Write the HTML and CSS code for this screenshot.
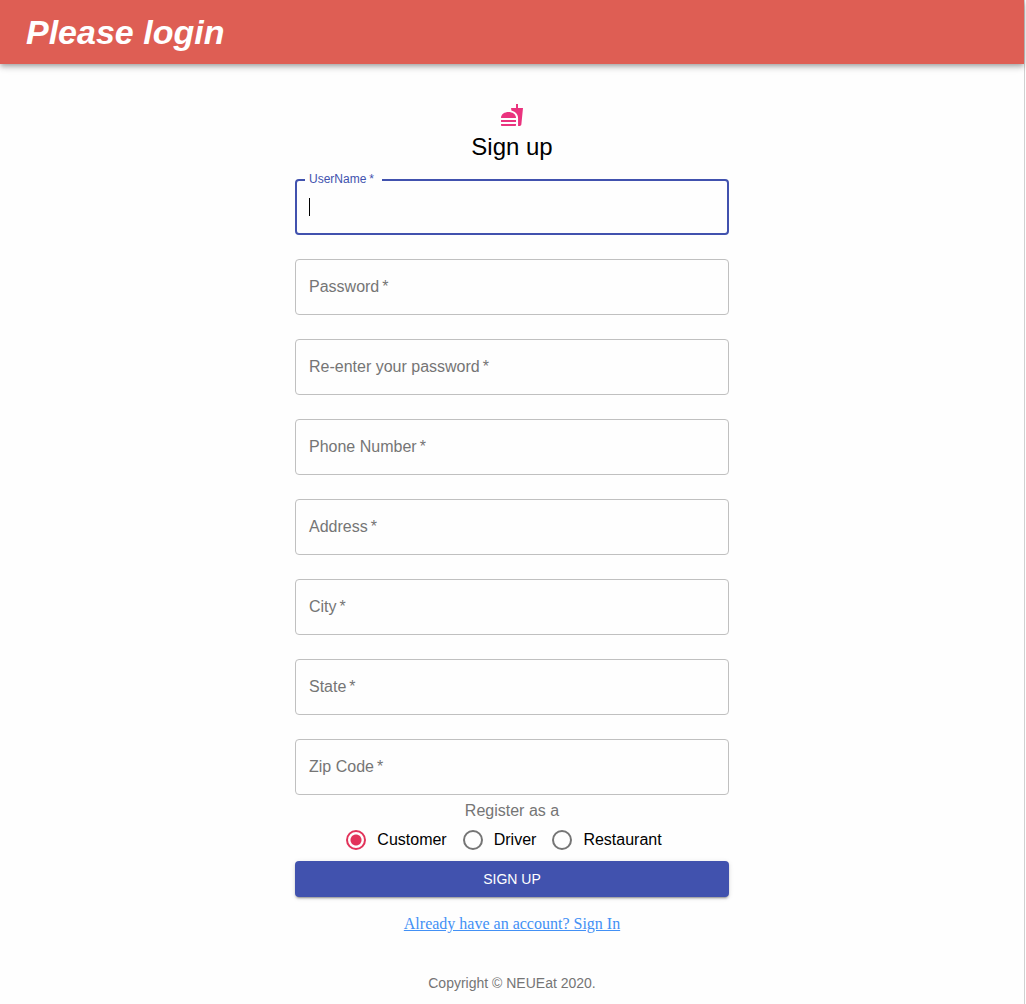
FILE: index.html
```html
<!DOCTYPE html>
<html lang="en">
<head>
  <meta charset="utf-8">
  <meta name="viewport" content="width=device-width, initial-scale=1">
  <title>Sign up</title>
  <link rel="stylesheet" href="styles.css">
</head>
<body>
  <div class="page">
    <header class="app-bar">
      <h1 class="app-title">Please login</h1>
    </header>
    <main class="container">
      <svg class="logo" viewBox="0 0 24 24" aria-hidden="true">
        <path d="M18.060 22.990h1.660c.84 0 1.530-.64 1.630-1.460L23 5.050h-5V1h-1.970v4.050h-4.970l.3 2.340c1.710.47 3.310 1.320 4.270 2.260 1.440 1.420 2.430 2.890 2.430 5.290v8.050zM1 21.990V21h15.030v.99c0 .55-.45 1-1.010 1H2.010c-.56 0-1.010-.45-1.010-1zm15.030-7c0-8-15.030-8-15.030 0h15.030zM1.020 17h15v2h-15z"/>
      </svg>
      <h2 class="title">Sign up</h2>
      <form class="form">
        <div class="fields">
          <div class="field field-active">
            <input class="field-input" type="text" id="username" required autofocus>
            <label class="field-label" for="username">UserName<span class="mark">*</span></label>
          </div>
          <div class="field">
            <input class="field-input" type="password" id="password" required>
            <label class="field-label" for="password">Password<span class="mark">*</span></label>
          </div>
          <div class="field">
            <input class="field-input" type="password" id="password2" required>
            <label class="field-label" for="password2">Re-enter your password<span class="mark">*</span></label>
          </div>
          <div class="field">
            <input class="field-input" type="tel" id="phone" required>
            <label class="field-label" for="phone">Phone Number<span class="mark">*</span></label>
          </div>
          <div class="field">
            <input class="field-input" type="text" id="address" required>
            <label class="field-label" for="address">Address<span class="mark">*</span></label>
          </div>
          <div class="field">
            <input class="field-input" type="text" id="city" required>
            <label class="field-label" for="city">City<span class="mark">*</span></label>
          </div>
          <div class="field">
            <input class="field-input" type="text" id="state" required>
            <label class="field-label" for="state">State<span class="mark">*</span></label>
          </div>
          <div class="field">
            <input class="field-input" type="text" id="zip" required>
            <label class="field-label" for="zip">Zip Code<span class="mark">*</span></label>
          </div>
        </div>
        <fieldset class="roles">
          <legend class="roles-title">Register as a</legend>
          <div class="roles-list">
            <label class="role"><input class="radio" type="radio" name="role" value="customer" checked>Customer</label>
            <label class="role"><input class="radio" type="radio" name="role" value="driver">Driver</label>
            <label class="role"><input class="radio" type="radio" name="role" value="restaurant">Restaurant</label>
          </div>
        </fieldset>
        <button class="submit" type="submit">SIGN UP</button>
      </form>
      <a class="signin" href="#signin">Already have an account? Sign In</a>
      <footer class="copyright">Copyright © NEUEat 2020.</footer>
    </main>
  </div>
</body>
</html>
```
FILE: styles.css
```css
* {
  box-sizing: border-box;
}

body {
  margin: 0;
  padding-right: 1px;
  background: #fefefe;
  color: #000;
  font-family: "Liberation Sans", Arial, sans-serif;
  font-size: 16px;
}

.page {
  min-height: 100vh;
  border-right: 1px solid #d0d0d0;
}

.app-bar {
  display: flex;
  align-items: center;
  height: 64px;
  padding: 0 26px;
  background: #de5e54;
  color: #fff;
  box-shadow: 0 2px 4px -1px rgba(0, 0, 0, 0.2), 0 4px 5px 0 rgba(0, 0, 0, 0.14), 0 1px 10px 0 rgba(0, 0, 0, 0.12);
}

.app-title {
  margin: 0;
  font-size: 34px;
  font-style: italic;
  font-weight: 700;
  line-height: 40px;
}

.container {
  display: flex;
  flex-direction: column;
  align-items: center;
  max-width: 434px;
  margin: 0 auto;
  padding-top: 39px;
}

.logo {
  width: 24px;
  height: 24px;
  fill: #ea337e;
}

.title {
  margin: 4px 0 16px;
  font-size: 24px;
  font-weight: 400;
  line-height: 32px;
}

.form {
  width: 100%;
}

.fields {
  display: grid;
  gap: 24px;
}

.field {
  position: relative;
}

.field-input {
  display: block;
  width: 100%;
  height: 56px;
  padding: 0 13px;
  border: 1px solid #c0c0c0;
  border-radius: 4px;
  outline: 0;
  background: transparent;
  color: #000;
  font: inherit;
}

.field-label {
  position: absolute;
  top: 18px;
  left: 14px;
  color: #757575;
  line-height: 20px;
  pointer-events: none;
}

.mark {
  margin-left: 3px;
}

.field-active .field-input {
  padding: 0 12px;
  border: 2px solid #4152ae;
  background: linear-gradient(#000, #000) 12px center / 1px 18px no-repeat;
  caret-color: transparent;
}

.field-active .field-input:valid {
  background: transparent;
  caret-color: #000;
}

.field-active .field-label {
  top: -8px;
  left: 10px;
  padding: 0 8px 0 4px;
  background: #fefefe;
  color: #4152ae;
  font-size: 12px;
  line-height: 16px;
}

.roles {
  display: flex;
  flex-direction: column;
  margin: 0;
  padding: 0;
  border: 0;
}

.roles-title {
  width: 100%;
  padding: 6px 0;
  color: #757575;
  line-height: 20px;
  text-align: center;
}

.roles-list {
  display: flex;
  justify-content: center;
  padding: 3px 0 11px;
}

.role {
  display: flex;
  align-items: center;
  gap: 11px;
  margin-right: 16px;
  line-height: 20px;
}

.radio {
  width: 20px;
  height: 20px;
  margin: 0;
  appearance: none;
  border: 2px solid #757575;
  border-radius: 50%;
}

.radio:checked {
  border-color: #e2335a;
  background: radial-gradient(circle, #e2335a 5px, transparent 6px);
}

.submit {
  display: block;
  width: 100%;
  height: 36px;
  border: 0;
  border-radius: 4px;
  background: #4152ae;
  color: #fff;
  font: 500 14px "Liberation Sans", Arial, sans-serif;
  box-shadow: 0 3px 1px -2px rgba(0, 0, 0, 0.2), 0 2px 2px 0 rgba(0, 0, 0, 0.14), 0 1px 5px 0 rgba(0, 0, 0, 0.12);
}

.signin {
  margin-top: 17px;
  color: #4290f5;
  font-family: "Liberation Serif", "Times New Roman", serif;
  line-height: 20px;
}

.copyright {
  margin-top: 39px;
  color: #757575;
  font-size: 14px;
  line-height: 20px;
}
```
